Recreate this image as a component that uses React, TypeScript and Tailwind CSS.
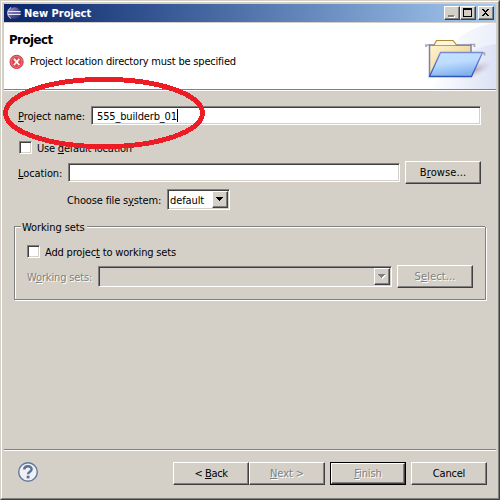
import React from 'react';

const RAISED =
  'border border-t-white border-l-white border-r-[#404040] border-b-[#404040] shadow-[inset_-1px_-1px_0_#808080] bg-[#d4d0c8]';
const SUNKEN =
  'border border-t-[#808080] border-l-[#808080] border-r-white border-b-white shadow-[inset_1px_1px_0_#404040,inset_-1px_-1px_0_#d4d0c8]';
const DISABLED = 'text-[#808080] [text-shadow:1px_1px_0_#fff]';

function Label({ children, className = '' }: { children: React.ReactNode; className?: string }) {
  return <span className={`block whitespace-nowrap leading-[14px] ${className}`}>{children}</span>;
}

function Key({ children }: { children: string }) {
  return <span className="underline decoration-1 underline-offset-[1px]">{children}</span>;
}

function Button({ children, disabled, primary, className = '' }: {
  children: React.ReactNode; disabled?: boolean; primary?: boolean; className?: string;
}) {
  return (
    <div className={`h-[23px] w-[76px] shrink-0 ${primary ? 'bg-black p-px' : ''} ${className}`}>
      <div className={`flex h-full w-full items-center justify-center ${RAISED} ${disabled ? DISABLED : ''}`}>
        <Label>{children}</Label>
      </div>
    </div>
  );
}

function Checkbox() {
  return <div className={`h-[13px] w-[13px] shrink-0 bg-white ${SUNKEN}`} />;
}

function Arrow({ disabled }: { disabled?: boolean }) {
  return (
    <div className={`flex h-[17px] w-4 shrink-0 items-center justify-center ${RAISED}`}>
      <svg width="8" height="5" viewBox="0 0 8 5" shapeRendering="crispEdges">
        {disabled && <path d="M1 1h7v1H7v1H6v1H5v1H4V4H3V3H2V2H1z" fill="#fff" />}
        <path d="M0 0h7v1H6v1H5v1H4v1H3V3H2V2H1V1H0z" fill={disabled ? '#808080' : '#000'} />
      </svg>
    </div>
  );
}

function EclipseLogo() {
  return (
    <svg width="16" height="16" viewBox="0 0 16 16">
      <defs>
        <linearGradient id="orb" x1="0" y1="0" x2="1" y2="1">
          <stop offset="0" stopColor="#9c9bc9" />
          <stop offset=".5" stopColor="#555292" />
          <stop offset="1" stopColor="#2c2867" />
        </linearGradient>
      </defs>
      <path d="M5 2.4A6.2 6.2 0 0 0 5 13.6A7.5 7.5 0 0 1 5 2.4" fill="#b5a9bd" stroke="#b5a9bd" strokeWidth="1" />
      <circle cx="8.6" cy="8" r="5.8" fill="url(#orb)" />
      <path d="M2 6.5h12.7M2 9.5h12.7" stroke="#e4e6f7" />
      <path d="M2 8h12.7" stroke="#8683b8" />
    </svg>
  );
}

function FolderBanner() {
  return (
    <svg width="96" height="66" viewBox="400 23 96 66">
      <defs>
        <linearGradient id="haze" x1="0" y1="0" x2="1" y2="0">
          <stop offset="0" stopColor="#fff" />
          <stop offset="1" stopColor="#dbe2f5" />
        </linearGradient>
        <linearGradient id="manila" x1="0" y1="0" x2="1" y2="1">
          <stop offset="0" stopColor="#fff5d3" />
          <stop offset="1" stopColor="#e8c779" />
        </linearGradient>
        <linearGradient id="front" x1="0" y1="0" x2=".3" y2="1">
          <stop offset="0" stopColor="#c4e4ff" />
          <stop offset=".5" stopColor="#bddcff" />
          <stop offset="1" stopColor="#84b2ed" />
        </linearGradient>
        <linearGradient id="edge" x1="0" y1="0" x2="0" y2="1">
          <stop offset="0" stopColor="#7c88d2" />
          <stop offset="1" stopColor="#2c52c0" />
        </linearGradient>
        <radialGradient id="shade">
          <stop offset="0" stopColor="#a58d9c" stopOpacity=".7" />
          <stop offset="1" stopColor="#c9c5df" stopOpacity="0" />
        </radialGradient>
      </defs>
      <path d="M432 89C438 52 462 26 496 23V89z" fill="url(#haze)" opacity=".55" />
      <path d="M430 89C448 67 467 47 496 44V89z" fill="url(#haze)" />
      <ellipse cx="475" cy="70" rx="19" ry="7" fill="url(#shade)" transform="rotate(-22 475 70)" />
      <path d="M426 47v-2h4M470 44.5h4.5v2.5M436 56v-2h4M481 53h3.5v2.5" fill="none" stroke="#aaa7b1" strokeWidth="1.7" />
      <path d="M429.5 76V45H471V65L460 76z" fill="url(#manila)" stroke="#8180ad" strokeWidth="1.5" />
      <path d="M434 45l2.5-4.5h16.5l3.5 4.5" fill="#fff8de" stroke="#b18a36" strokeWidth="1.2" />
      <path d="M430 45.5h4M456 45.5h14" stroke="#a58a54" />
      <path d="M440.5 52.5h42L471.5 76.5h-42z" fill="url(#front)" stroke="url(#edge)" strokeWidth="1.3" />
    </svg>
  );
}

function ErrorIcon() {
  return (
    <svg width="16" height="16" viewBox="0 0 16 16" className="shrink-0">
      <circle cx="7.6" cy="7.9" r="6.6" fill="#e34852" stroke="#c73b45" />
      <circle cx="7.6" cy="7.9" r="5.5" fill="none" stroke="#f28b8e" strokeWidth=".7" />
      <path d="M5 4.9L10.3 11M10.3 4.9L5 11" stroke="#fff" strokeWidth="1.7" />
    </svg>
  );
}

function TitleButton({ kind, className = '' }: { kind: 'min' | 'max' | 'close'; className?: string }) {
  return (
    <div className={`h-[14px] w-4 shrink-0 ${RAISED} ${className}`}>
      <svg className="block" width="14" height="12" viewBox="0 0 14 12" shapeRendering="crispEdges">
        {kind === 'min' && <path d="M4 9h6v2H4z" fill="#fff" />}
        {kind === 'min' && <path d="M3 8h6v2H3z" fill="#808080" />}
        {kind === 'max' && <path d="M2 1h9v9H2zM3 3v6h7V3z" fill="#000" fillRule="evenodd" />}
        {kind === 'close' && (
          <path d="M3 2h2v1h1v1h1V3h1V2h2v1H9v1H8v1H7v1h1v1h1v1h1v1H8V8H7V7H6v1H5v1H3V8h1V7h1V6h1V5H5V4H4V3H3z" fill="#000" />
        )}
      </svg>
    </div>
  );
}

export default function App() {
  return (
    <div className="relative h-[500px] w-[500px] overflow-hidden border border-t-[#d4d0c8] border-l-[#d4d0c8] border-r-[#404040] border-b-[#404040] bg-[#d4d0c8] font-['DejaVu_Sans_Condensed','DejaVu_Sans',sans-serif] text-[11px] tracking-[-0.1px] text-black [font-stretch:condensed]">
      <div className="flex h-[498px] w-[498px] flex-col border border-t-white border-l-white border-r-[#808080] border-b-[#808080] p-[2px]">
        <header className="flex h-[18px] shrink-0 items-center bg-linear-to-r from-[#0a246a] to-[#a6caf0] pl-[2px] pr-[2px] text-white">
          <EclipseLogo />
          <Label className="ml-[2px] pt-[2px] font-bold tracking-normal">New Project</Label>
          <div className="ml-auto flex">
            <TitleButton kind="min" />
            <TitleButton kind="max" />
            <TitleButton kind="close" className="ml-[2px]" />
          </div>
        </header>

        <section className="mt-px flex h-[66px] shrink-0 justify-between bg-white">
          <div className="pl-[5px] pt-[8px]">
            <Label className="h-[16px] pt-px text-[13px] font-bold leading-[16px] tracking-[-0.45px]">Project</Label>
            <div className="mt-[7px] flex items-start">
              <ErrorIcon />
              <Label className="ml-[5px] pt-px tracking-[-0.2px]">Project location directory must be specified</Label>
            </div>
          </div>
          <FolderBanner />
        </section>
        <div className="h-[2px] shrink-0 border-t border-t-[#808080] bg-white" />

        <main className="flex h-[358px] shrink-0 flex-col pl-[10px] pr-[10px]">
          <div className="mt-[15px] flex h-[19px] items-center pl-[4px] pr-[5px]">
            <Label className="w-[73px] pt-[2px]"><Key>P</Key>roject name:</Label>
            <div className={`flex h-[19px] flex-1 items-center bg-white pl-[5px] ${SUNKEN}`}>
              <Label className="pt-[2px] tracking-[-0.15px]">555_builderb_01</Label>
              <div className="h-[13px] w-px bg-black" />
            </div>
          </div>
          <div className="mt-[16px] flex h-[13px] items-center pl-[5px]">
            <Checkbox />
            <Label className="ml-[5px] pt-[2px] tracking-[-0.2px]">Use <Key>d</Key>efault location</Label>
          </div>
          <div className="mt-[7px] flex h-[23px] items-center pl-[4px]">
            <Label className="w-[50px] pt-[2px]"><Key>L</Key>ocation:</Label>
            <div className={`h-[19px] w-[332px] bg-white ${SUNKEN}`} />
            <Button className="ml-[5px] tracking-[0.1px]">B<Key>r</Key>owse...</Button>
          </div>
          <div className="mt-[5px] flex h-[21px] items-center pl-[53px]">
            <Label className="w-[100px] pt-[2px] tracking-[-0.15px]">Choose file s<Key>y</Key>stem:</Label>
            <div className={`flex h-[21px] w-[63px] items-center justify-between bg-white pl-[2px] pr-px ${SUNKEN}`}>
              <Label className="pt-[2px]">default</Label>
              <Arrow />
            </div>
          </div>
          <div className="mt-[10px] flex h-[14px] shrink-0 items-center">
            <div className="h-[2px] w-[7px] border-l border-t border-[#808080] bg-white" />
            <Label className="w-[66px] pl-px pt-[2px]">Working sets</Label>
            <div className="mr-px h-[2px] flex-1 border-t border-[#808080] bg-white" />
          </div>
          <div className="-mt-[7px] h-[73px] shrink-0 border border-t-0 border-[#808080] pl-[12px] pt-[18px] shadow-[inset_1px_0_0_#fff,1px_1px_0_#fff]">
            <div className="flex h-[13px] items-center">
              <Checkbox />
              <Label className="ml-[5px] pt-[2px] tracking-[-0.17px]">Add projec<Key>t</Key> to working sets</Label>
            </div>
            <div className="mt-[7px] flex h-[23px] items-center">
              <Label className={`w-[71px] pt-[2px] tracking-[-0.15px] ${DISABLED}`}>W<Key>o</Key>rking sets:</Label>
              <div className={`flex h-[21px] w-[294px] items-center justify-end pr-px ${SUNKEN}`}>
                <Arrow disabled />
              </div>
              <Button disabled className="ml-[5px] tracking-[0.1px]">S<Key>e</Key>lect...</Button>
            </div>
          </div>
        </main>

        <div className="h-[2px] shrink-0 border-t border-t-[#808080] bg-white" />
        <footer className="flex pt-[11px]">
          <svg width="22" height="22" viewBox="0 0 22 22" className="ml-[13px]">
            <circle cx="11" cy="10" r="9.3" fill="#eef0f4" stroke="#62789c" strokeWidth="1.4" />
            <path d="M7.3 7.6C7.3 3.4 14.6 3.3 14.6 7.2C14.6 9.8 11.1 9.6 11.1 12.3" fill="none" stroke="#5b7197" strokeWidth="2.5" />
            <rect x="9.7" y="13.7" width="2.8" height="2.7" fill="#5b7197" />
          </svg>
          <Button className="ml-[134px] tracking-[-0.4px]">&lt; <Key>B</Key>ack</Button>
          <Button disabled><Key>N</Key>ext &gt;</Button>
          <Button disabled primary className="ml-[5px]"><Key>F</Key>inish</Button>
          <Button className="ml-[5px] tracking-[-0.2px]">Cancel</Button>
        </footer>
      </div>
      <svg className="pointer-events-none absolute left-0 top-0 -ml-px -mt-px" width="210" height="155" shapeRendering="crispEdges">
        <ellipse cx="104" cy="113" rx="98.4" ry="33.6" fill="none" stroke="#ed1c24" strokeWidth="4.9" />
      </svg>
    </div>
  );
}
